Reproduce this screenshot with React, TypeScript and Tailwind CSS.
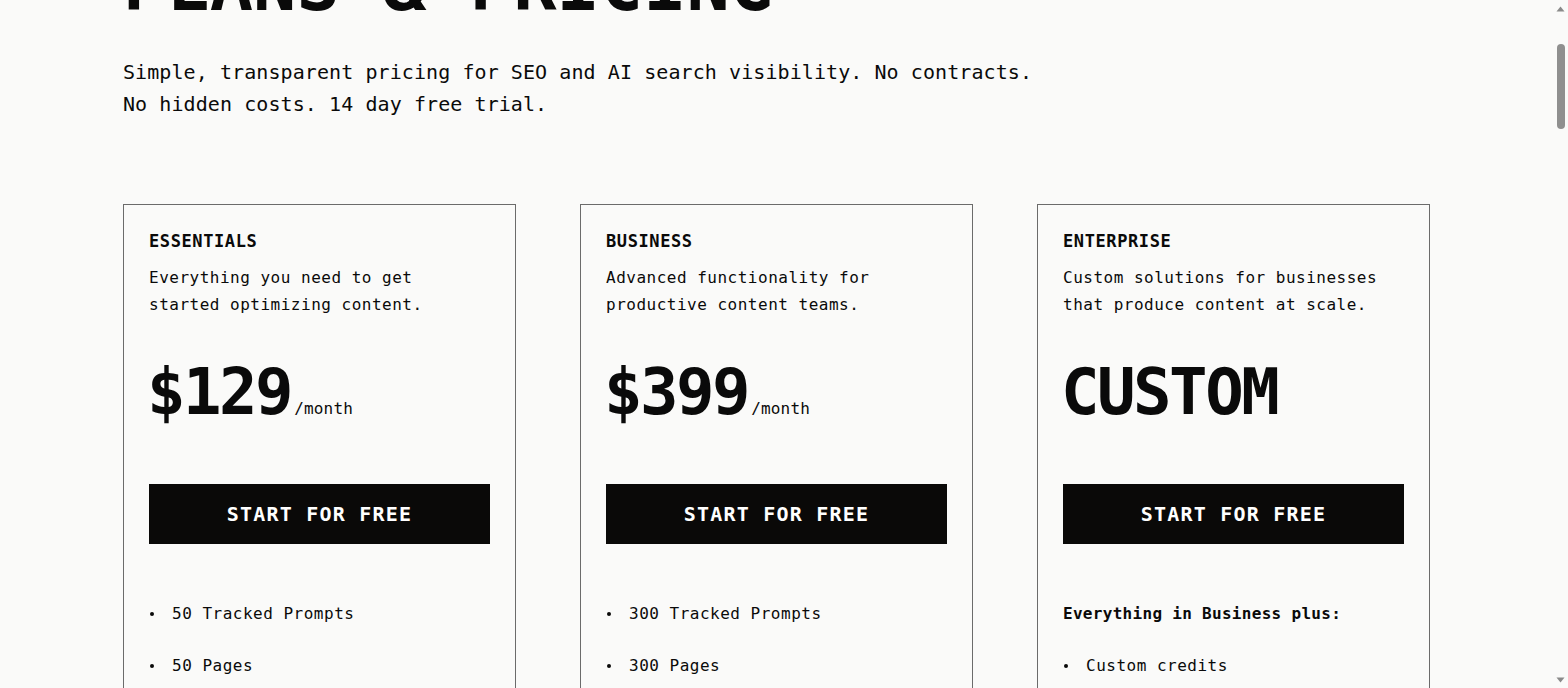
const PLANS = [
  {
    name: "ESSENTIALS",
    desc: "Everything you need to get started optimizing content.",
    price: "$129",
    per: "/month",
    intro: "",
    features: ["50 Tracked Prompts", "50 Pages", "Content Editor", "AI Visibility Reports", "Email support"],
  },
  {
    name: "BUSINESS",
    desc: "Advanced functionality for productive content teams.",
    price: "$399",
    per: "/month",
    intro: "",
    features: ["300 Tracked Prompts", "300 Pages", "Content Editor", "AI Visibility Reports", "Priority support"],
  },
  {
    name: "ENTERPRISE",
    desc: "Custom solutions for businesses that produce content at scale.",
    price: "CUSTOM",
    per: "",
    intro: "Everything in Business plus:",
    features: ["Custom credits", "SSO & SAML", "Dedicated success manager", "Custom integrations"],
  },
];

function Scrollbar() {
  return (
    <div className="fixed top-0 right-0 h-screen w-[15px] bg-[#fafaf9] flex flex-col items-center">
      <svg className="mt-[6px] shrink-0" width="9" height="6" viewBox="0 0 9 6">
        <path d="M4.5 0.5 L8.5 5.5 L0.5 5.5 Z" fill="#8a8a8a" />
      </svg>
      <div className="mt-[32px] w-[8px] h-[85px] rounded-full bg-[#8f8f8f]" />
      <svg className="mt-auto mb-[5px] shrink-0" width="9" height="6" viewBox="0 0 9 6">
        <path d="M0.5 0.5 L8.5 0.5 L4.5 5.5 Z" fill="#8a8a8a" />
      </svg>
    </div>
  );
}

export default function App() {
  return (
    <div
      className="min-h-screen bg-[#fafaf9] text-[#0a0a0a] pr-[15px] pb-24"
      style={{ fontFamily: '"DejaVu Sans Mono", "Liberation Mono", monospace' }}
    >
      <div className="w-[1307px] mx-auto">
        <h1 className="-mt-[51px] text-[72px] leading-none font-bold">PLANS &amp; PRICING</h1>
        <p className="mt-[35px] max-w-[925px] text-[20px] leading-[32px] tracking-[0.08px]">
          Simple, transparent pricing for SEO and AI search visibility. No contracts. No hidden costs. 14 day free trial.
        </p>

        <div className="mt-[84px] grid grid-cols-3 gap-[64px]">
          {PLANS.map((plan) => (
            <div key={plan.name} className="border border-[#6b6b6b] px-[25px] pt-[24px] pb-10">
              <h3 className="text-[17px] leading-[24px] font-bold tracking-[0.6px]">{plan.name}</h3>
              <p className="mt-[11px] text-[16px] leading-[27px] tracking-[0.5px]">{plan.desc}</p>

              <div className="mt-[42px] flex items-baseline">
                <span className="-ml-[2px] text-[64px] leading-none font-bold tracking-[-2.5px]">{plan.price}</span>
                {plan.per && <span className="ml-[3px] text-[16px] tracking-[0.2px]">{plan.per}</span>}
              </div>

              <button className="mt-[60px] w-full h-[60px] bg-[#0a0908] text-white text-[20px] font-bold tracking-[1.2px]">
                START FOR FREE
              </button>

              <div className="mt-[58px] flex flex-col gap-[28px] text-[16px] leading-[24px] tracking-[0.5px]">
                {plan.intro && <p className="font-bold tracking-[0.3px]">{plan.intro}</p>}
                {plan.features.map((f) => (
                  <div key={f} className="flex items-center">
                    <span className="ml-[1px] w-[4px] h-[4px] rounded-full bg-[#0a0a0a] shrink-0" />
                    <span className="ml-[18px]">{f}</span>
                  </div>
                ))}
              </div>
            </div>
          ))}
        </div>
      </div>
      <Scrollbar />
    </div>
  );
}
